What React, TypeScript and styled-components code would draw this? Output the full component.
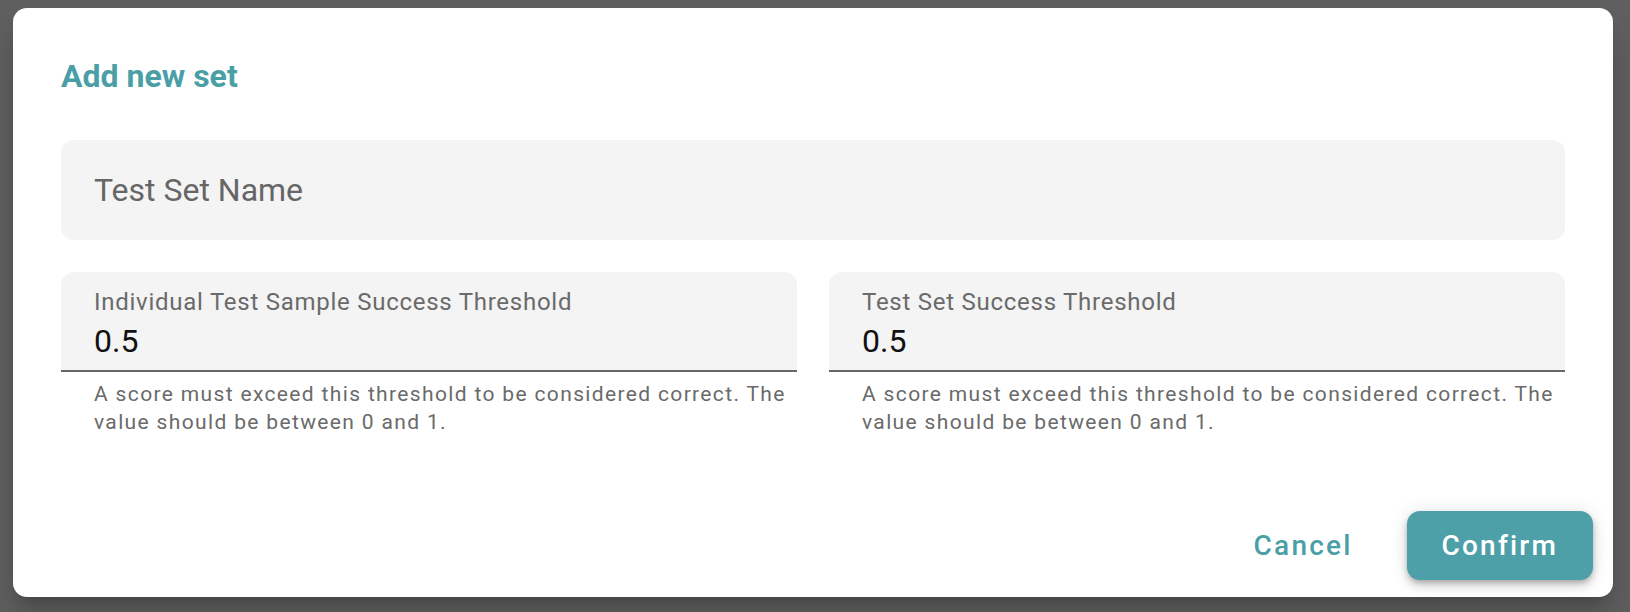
import React from "react";
import styled, { createGlobalStyle } from "styled-components";

const GlobalStyle = createGlobalStyle`
  html, body {
    margin: 0;
    padding: 0;
    background: #606060;
    font-family: Roboto, "Noto Sans", "Liberation Sans", sans-serif;
  }
  * { box-sizing: border-box; }
`;

const Backdrop = styled.div`
  width: 1630px;
  height: 612px;
  padding: 8px 17px 15px 13px;
  background: #606060;
`;

const Dialog = styled.div`
  width: 1600px;
  height: 589px;
  background: #ffffff;
  border-radius: 14px;
  box-shadow: 0 11px 15px -7px rgba(0, 0, 0, 0.2), 0 24px 38px 3px rgba(0, 0, 0, 0.14);
  display: flex;
  flex-direction: column;
`;

const Title = styled.h2`
  margin: 0;
  padding: 48px 48px 0;
  font-size: 32px;
  line-height: 40px;
  font-weight: 700;
  color: #4a9fa7;
`;

const Content = styled.div`
  padding: 44px 48px 0;
  display: flex;
  flex-direction: column;
  gap: 32px;
`;

const NameField = styled.div`
  height: 100px;
  background: #f4f4f4;
  border-radius: 13px;
  padding: 0 33px;
  display: flex;
  align-items: center;
  font-size: 32px;
  line-height: 40px;
  color: #666666;
`;

const Row = styled.div`
  display: grid;
  grid-template-columns: 1fr 1fr;
  gap: 32px;
`;

const FieldGroup = styled.div`
  display: flex;
  flex-direction: column;
`;

const FilledField = styled.div`
  height: 100px;
  background: #f4f4f4;
  border-radius: 13px 13px 0 0;
  border-bottom: 2px solid #666666;
  padding: 16px 33px 0;
  display: flex;
  flex-direction: column;
  gap: 5px;
`;

const Label = styled.div`
  font-size: 24px;
  line-height: 28px;
  letter-spacing: 0.74px;
  color: #6a6a6a;
`;

const Value = styled.div`
  font-size: 32px;
  line-height: 40px;
  color: #111111;
`;

const Helper = styled.div`
  margin: 8px 0 0 33px;
  font-size: 21px;
  line-height: 28px;
  letter-spacing: 1.35px;
  color: #6a6a6a;
`;

const Actions = styled.div`
  padding: 75px 20px 16px;
  display: flex;
  justify-content: flex-end;
  gap: 19px;
`;

const Button = styled.button<{ $primary?: boolean }>`
  height: 69px;
  padding: 0 35px;
  border: none;
  border-radius: 13px;
  font-family: Roboto, "Noto Sans", "Liberation Sans", sans-serif;
  font-size: 28px;
  font-weight: 500;
  letter-spacing: 2.2px;
  cursor: pointer;
  background: ${(p) => (p.$primary ? "#4da0a7" : "transparent")};
  color: ${(p) => (p.$primary ? "#ffffff" : "#4a9fa7")};
  box-shadow: ${(p) =>
    p.$primary
      ? "0 3px 5px -1px rgba(0,0,0,0.2), 0 6px 10px 0 rgba(0,0,0,0.14), 0 1px 18px 0 rgba(0,0,0,0.12)"
      : "none"};
`;

const helperText =
  "A score must exceed this threshold to be considered correct. The value should be between 0 and 1.";

const thresholds = [
  { label: "Individual Test Sample Success Threshold", value: "0.5" },
  { label: "Test Set Success Threshold", value: "0.5" },
];

export default function App() {
  return (
    <>
      <GlobalStyle />
      <Backdrop>
        <Dialog>
          <Title>Add new set</Title>
          <Content>
            <NameField>Test Set Name</NameField>
            <Row>
              {thresholds.map((t) => (
                <FieldGroup key={t.label}>
                  <FilledField>
                    <Label>{t.label}</Label>
                    <Value>{t.value}</Value>
                  </FilledField>
                  <Helper>{helperText}</Helper>
                </FieldGroup>
              ))}
            </Row>
          </Content>
          <Actions>
            <Button>Cancel</Button>
            <Button $primary>Confirm</Button>
          </Actions>
        </Dialog>
      </Backdrop>
    </>
  );
}
